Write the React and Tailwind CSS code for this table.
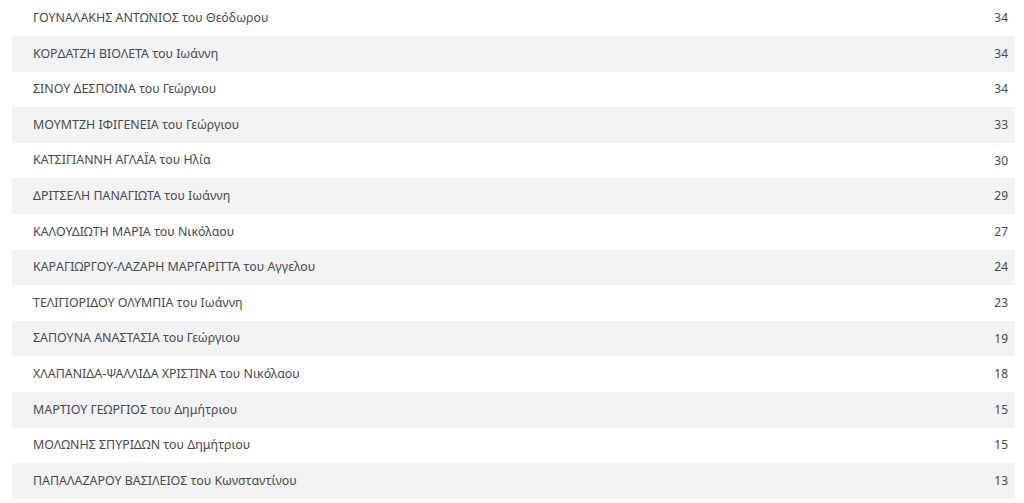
import React from 'react';

const rows = [
  ['ΓΟΥΝΑΛΑΚΗΣ ΑΝΤΩΝΙΟΣ του Θεόδωρου', 34],
  ['ΚΟΡΔΑΤΖΗ ΒΙΟΛΕΤΑ του Ιωάννη', 34],
  ['ΣΙΝΟΥ ΔΕΣΠΟΙΝΑ του Γεώργιου', 34],
  ['ΜΟΥΜΤΖΗ ΙΦΙΓΕΝΕΙΑ του Γεώργιου', 33],
  ['ΚΑΤΣΙΓΙΑΝΝΗ ΑΓΛΑΪΑ του Ηλία', 30],
  ['ΔΡΙΤΣΕΛΗ ΠΑΝΑΓΙΩΤΑ του Ιωάννη', 29],
  ['ΚΑΛΟΥΔΙΩΤΗ ΜΑΡΙΑ του Νικόλαου', 27],
  ['ΚΑΡΑΓΙΩΡΓΟΥ-ΛΑΖΑΡΗ ΜΑΡΓΑΡΙΤΤΑ του Αγγελου', 24],
  ['ΤΕΛΙΓΙΟΡΙΔΟΥ ΟΛΥΜΠΙΑ του Ιωάννη', 23],
  ['ΣΑΠΟΥΝΑ ΑΝΑΣΤΑΣΙΑ του Γεώργιου', 19],
  ['ΧΛΑΠΑΝΙΔΑ-ΨΑΛΛΙΔΑ ΧΡΙΣΤΙΝΑ του Νικόλαου', 18],
  ['ΜΑΡΤΙΟΥ ΓΕΩΡΓΙΟΣ του Δημήτριου', 15],
  ['ΜΟΛΩΝΗΣ ΣΠΥΡΙΔΩΝ του Δημήτριου', 15],
  ['ΠΑΠΑΛΑΖΑΡΟΥ ΒΑΣΙΛΕΙΟΣ του Κωνσταντίνου', 13],
];

export default function App() {
  return (
    <div className="w-[1024px] h-[503px] bg-white overflow-hidden px-3 pt-[0.5px] font-['Noto_Sans',sans-serif] text-[12.4px] text-[#4a4a4a]">
      <div className="flex flex-col w-[1003px]">
        {rows.map(([name, votes], i) => (
          <div
            key={i}
            className={`flex items-center justify-between h-[35.6px] pl-[21px] pr-[7px] ${i % 2 === 1 ? 'bg-[#f1f3f5]' : 'bg-white'}`}
          >
            <span>{name}</span>
            <span className="text-[12px]">{votes}</span>
          </div>
        ))}
      </div>
    </div>
  );
}
